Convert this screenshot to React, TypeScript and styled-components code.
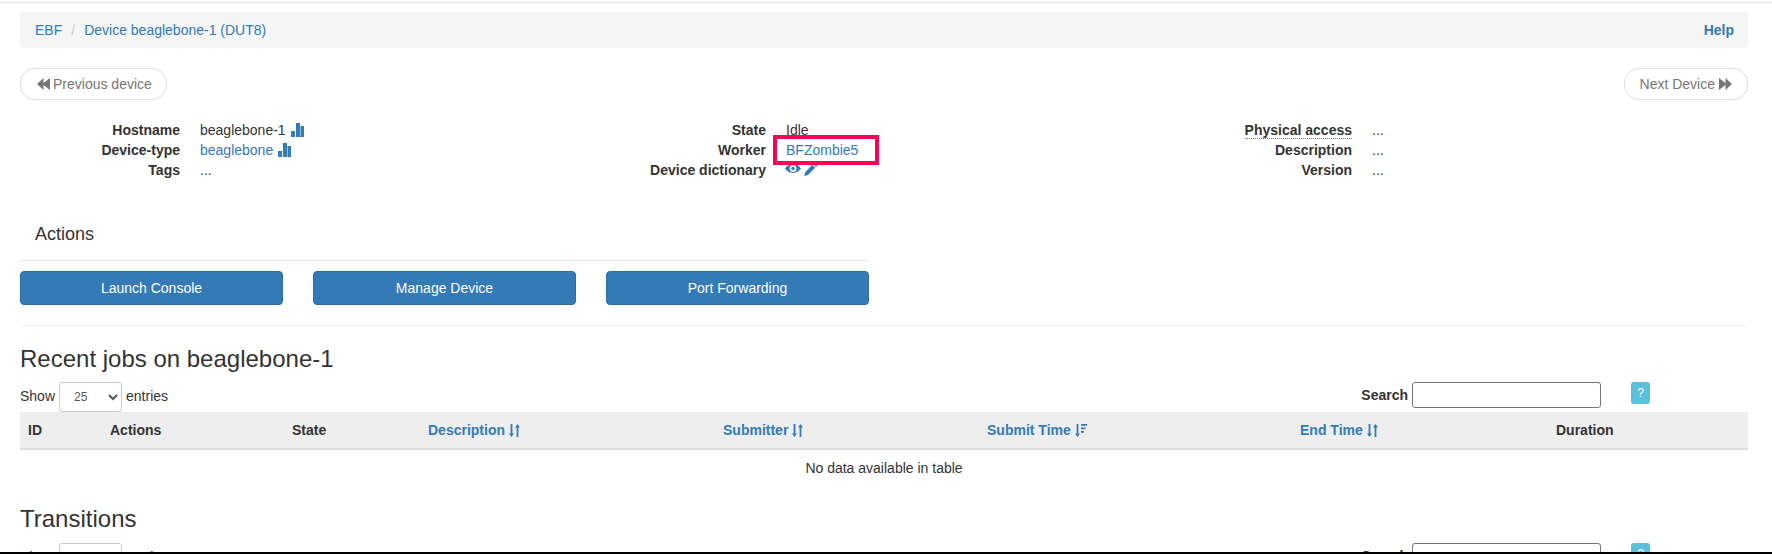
import React from "react";
import styled, {createGlobalStyle} from "styled-components";

const GlobalStyle = createGlobalStyle`
  html, body {
    margin: 0;
    height: 554px;
    overflow: hidden;
    background: #fff;
  }
  body {
    font-family: "Liberation Sans", Arial, sans-serif;
    font-size: 14px;
    line-height: 20px;
    color: #333;
  }
  * {
    box-sizing: border-box;
  }
`;

const Page = styled.div`
  position: relative;
  height: 554px;
  overflow: hidden;
`;

const TopRule = styled.div`
  height: 3px;
  border-bottom: 1px solid #e7e7e7;
`;

const Content = styled.div`
  padding: 9px 24px 0 20px;
`;

const Link = styled.a`
  color: #337ab7;
  text-decoration: none;
`;

const Breadcrumb = styled.nav`
  display: flex;
  justify-content: space-between;
  height: 36px;
  padding: 8px 14px 8px 15px;
  background: #f5f5f5;
  border-radius: 4px;
`;

const Crumbs = styled.div`
  display: flex;
  gap: 9px;
`;

const CrumbDivider = styled.span`
  color: #ccc;
`;

const HelpLink = styled(Link)`
  font-weight: 700;
`;

const Pager = styled.div`
  display: flex;
  justify-content: space-between;
  margin-top: 20px;
`;

const PagerButton = styled.a`
  display: inline-flex;
  align-items: center;
  gap: 3px;
  height: 32px;
  padding: 0 15px;
  border: 1px solid #ddd;
  border-radius: 15px;
  color: #777;
`;

const PreviousButton = styled(PagerButton)`
  padding-right: 14px;
`;

const InfoGrid = styled.div`
  display: grid;
  grid-template-columns: repeat(3, 586px);
  margin-top: 20px;
`;

const InfoList = styled.dl`
  display: grid;
  grid-template-columns: 160px 1fr;
  grid-auto-rows: 20px;
  column-gap: 20px;
  margin: 0;
`;

const InfoTerm = styled.dt`
  font-weight: 700;
  text-align: right;
`;

const InfoValue = styled.dd`
  margin: 0;
`;

const Abbr = styled.abbr`
  border-bottom: 1px dotted #777;
  text-decoration: none;
`;

const Highlight = styled.span`
  position: relative;
  display: inline-block;

  &::after {
    content: "";
    position: absolute;
    top: -5px;
    bottom: -5px;
    left: -13px;
    right: -21px;
    border: 4px solid #ff0055;
  }
`;

const Glyph = styled.svg`
  display: inline-block;
  width: 14px;
  height: 14px;
  vertical-align: -2px;
  fill: currentColor;
`;

const EyeGlyph = styled(Glyph)`
  width: 16px;
  margin-left: -1px;
  vertical-align: -1px;
`;

const PencilGlyph = styled(Glyph)`
  margin-left: -1px;
  vertical-align: -1px;
`;

const SortGlyph = styled(Glyph)`
  vertical-align: -3px;
`;

const ActionsPanel = styled.section`
  width: 849px;
`;

const ActionsHeading = styled.h4`
  margin: 0;
  padding: 44px 15px 16px;
  border-bottom: 1px solid #e5e5e5;
  font-size: 18px;
  font-weight: 400;
  line-height: 20px;
`;

const ActionButtons = styled.div`
  display: grid;
  grid-template-columns: repeat(3, 263px);
  column-gap: 30px;
  margin-top: 10px;
`;

const ActionButton = styled.a`
  display: flex;
  align-items: center;
  justify-content: center;
  height: 34px;
  background: #337ab7;
  border: 1px solid #2e6da4;
  border-radius: 4px;
  color: #fff;
`;

const Divider = styled.hr`
  margin: 20px 0 0;
  border: 0;
  border-top: 1px solid #eee;
`;

const SectionTitle = styled.h2<{ $bottom: number }>`
  margin: 20px 0 ${(p) => p.$bottom}px;
  font-size: 24px;
  font-weight: 400;
  line-height: 26px;
`;

const TableTools = styled.div`
  display: flex;
  justify-content: space-between;
  height: 30px;
`;

const EntriesControl = styled.label`
  display: flex;
  align-items: center;
  gap: 4px;
  height: 28px;
`;

const EntriesSelect = styled.select`
  align-self: flex-start;
  width: 63px;
  height: 30px;
  padding: 5px 10px;
  background: #fff;
  border: 1px solid #ccc;
  border-radius: 3px;
  color: #555;
  font-family: inherit;
  font-size: 12px;
`;

const SearchControl = styled.div`
  display: flex;
  align-items: flex-start;
  padding-right: 98px;
`;

const SearchLabel = styled.label`
  margin-right: 4px;
  font-weight: 700;
  line-height: 27px;
`;

const SearchInput = styled.input`
  width: 189px;
  height: 26px;
  padding: 1px 2px;
  background: #fff;
  border: 1px solid #767676;
  border-radius: 3px;
`;

const HintButton = styled.span`
  display: flex;
  align-items: center;
  justify-content: center;
  width: 19px;
  height: 22px;
  margin-left: 30px;
  background: #5bc0de;
  border-radius: 3px;
  color: #fff;
  font-size: 12px;
`;

const Table = styled.table`
  width: 100%;
  border-collapse: collapse;
  table-layout: fixed;
`;

const HeadRow = styled.tr`
  background: #eee;
`;

const HeadCell = styled.th<{ $width: number }>`
  width: ${(p) => p.$width}px;
  padding: 8px;
  border-bottom: 2px solid #ddd;
  font-weight: 700;
  text-align: left;
`;

const EmptyCell = styled.td`
  padding: 8px;
  text-align: center;
`;

const BottomEdge = styled.div`
  position: absolute;
  left: 0;
  right: 0;
  bottom: 0;
  height: 2px;
  background: #000;
`;

const StatsIcon = () => (
    <Glyph viewBox="0 0 14 14">
        <path d="M1 8h4v6H1zM6 0h4v14H6zM10.5 3H14v11h-3.5z"/>
    </Glyph>
);

const BackwardIcon = () => (
    <Glyph viewBox="0 0 14 14">
        <path d="M7.5 1v5L14 1v12L7.5 8v5L1 7z"/>
    </Glyph>
);

const ForwardIcon = () => (
    <Glyph viewBox="0 0 14 14">
        <path d="M7.500 1v5L1 1v12l6.500-5v5L14 7z"/>
    </Glyph>
);

const EyeIcon = () => (
    <EyeGlyph viewBox="0 0 16 14">
        <path
            fillRule="evenodd"
            d="M8 2c3.400 0 6.200 1.900 8 4.600C14.200 9.300 11.400 11 8 11S1.800 9.300 0 6.600C1.800 3.900 4.600 2 8 2zM8 3.200a3.400 3.400 0 1 0 0 6.800 3.400 3.400 0 0 0 0-6.800zM8 4.700a1.800 1.800 0 1 1 0 3.600 1.800 1.800 0 0 1 0-3.600z"/>
    </EyeGlyph>
);

const PencilIcon = () => (
    <PencilGlyph viewBox="0 0 14 14">
        <path d="M10.500 0.500l3 3-1.500 1.500-3-3zM8.200 2.800l3 3-7.200 7.200-3.800 1 1-3.800z"/>
    </PencilGlyph>
);

const SortIcon = () => (
    <SortGlyph viewBox="0 0 14 14">
        <path d="M1.600 0h1.800v9.500H5L2.500 13 0 9.500h1.600zM7.600 13V3.500H6L8.500 0 11 3.500H9.400V13z"/>
    </SortGlyph>
);

const SortDescIcon = () => (
    <SortGlyph viewBox="0 0 14 14">
        <path d="M1.600 0h1.800v9.500H5L2.500 13 0 9.500h1.600zM6 0h6v1.800H6zM6 3.500h4.500v1.800H6zM6 7h3v1.800H6z"/>
    </SortGlyph>
);

interface ColumnInterface {
    label: string,
    width: number,
    icon?: React.ReactNode,
}

const jobColumns: ColumnInterface[] = [
    {label: "ID", width: 82},
    {label: "Actions", width: 182},
    {label: "State", width: 136},
    {label: "Description", width: 295, icon: <SortIcon/>},
    {label: "Submitter", width: 264, icon: <SortIcon/>},
    {label: "Submit Time", width: 313, icon: <SortDescIcon/>},
    {label: "End Time", width: 256, icon: <SortIcon/>},
    {label: "Duration", width: 200},
];

const TableToolbar = () => (
    <TableTools>
        <EntriesControl>
            Show
            <EntriesSelect defaultValue="25">
                <option value="10">10</option>
                <option value="25">25</option>
                <option value="50">50</option>
                <option value="100">100</option>
            </EntriesSelect>
            entries
        </EntriesControl>
        <SearchControl>
            <SearchLabel>Search</SearchLabel>
            <SearchInput type="search"/>
            <HintButton>?</HintButton>
        </SearchControl>
    </TableTools>
);

export default function App() {
    return (
        <Page>
            <GlobalStyle/>
            <TopRule/>
            <Content>
                <Breadcrumb>
                    <Crumbs>
                        <Link>EBF</Link>
                        <CrumbDivider>/</CrumbDivider>
                        <Link>Device beaglebone-1 (DUT8)</Link>
                    </Crumbs>
                    <HelpLink>Help</HelpLink>
                </Breadcrumb>

                <Pager>
                    <PreviousButton><BackwardIcon/> Previous device</PreviousButton>
                    <PagerButton>Next Device <ForwardIcon/></PagerButton>
                </Pager>

                <InfoGrid>
                    <InfoList>
                        <InfoTerm>Hostname</InfoTerm>
                        <InfoValue>beaglebone-1 <Link><StatsIcon/></Link></InfoValue>
                        <InfoTerm>Device-type</InfoTerm>
                        <InfoValue><Link>beaglebone <StatsIcon/></Link></InfoValue>
                        <InfoTerm>Tags</InfoTerm>
                        <InfoValue>...</InfoValue>
                    </InfoList>
                    <InfoList>
                        <InfoTerm>State</InfoTerm>
                        <InfoValue>Idle</InfoValue>
                        <InfoTerm>Worker</InfoTerm>
                        <InfoValue><Highlight><Link>BFZombie5</Link></Highlight></InfoValue>
                        <InfoTerm>Device dictionary</InfoTerm>
                        <InfoValue><Link><EyeIcon/> <PencilIcon/></Link></InfoValue>
                    </InfoList>
                    <InfoList>
                        <InfoTerm><Abbr>Physical access</Abbr></InfoTerm>
                        <InfoValue>...</InfoValue>
                        <InfoTerm>Description</InfoTerm>
                        <InfoValue>...</InfoValue>
                        <InfoTerm>Version</InfoTerm>
                        <InfoValue>...</InfoValue>
                    </InfoList>
                </InfoGrid>

                <ActionsPanel>
                    <ActionsHeading>Actions</ActionsHeading>
                    <ActionButtons>
                        <ActionButton>Launch Console</ActionButton>
                        <ActionButton>Manage Device</ActionButton>
                        <ActionButton>Port Forwarding</ActionButton>
                    </ActionButtons>
                </ActionsPanel>

                <Divider/>

                <SectionTitle $bottom={10}>Recent jobs on beaglebone-1</SectionTitle>
                <TableToolbar/>
                <Table>
                    <thead>
                    <HeadRow>
                        {jobColumns.map((col) => (
                            <HeadCell key={col.label} $width={col.width}>
                                {col.icon ? <Link>{col.label} {col.icon}</Link> : col.label}
                            </HeadCell>
                        ))}
                    </HeadRow>
                    </thead>
                    <tbody>
                    <tr>
                        <EmptyCell colSpan={jobColumns.length}>No data available in table</EmptyCell>
                    </tr>
                    </tbody>
                </Table>

                <SectionTitle $bottom={11}>Transitions</SectionTitle>
                <TableToolbar/>
            </Content>
            <BottomEdge/>
        </Page>
    );
}
